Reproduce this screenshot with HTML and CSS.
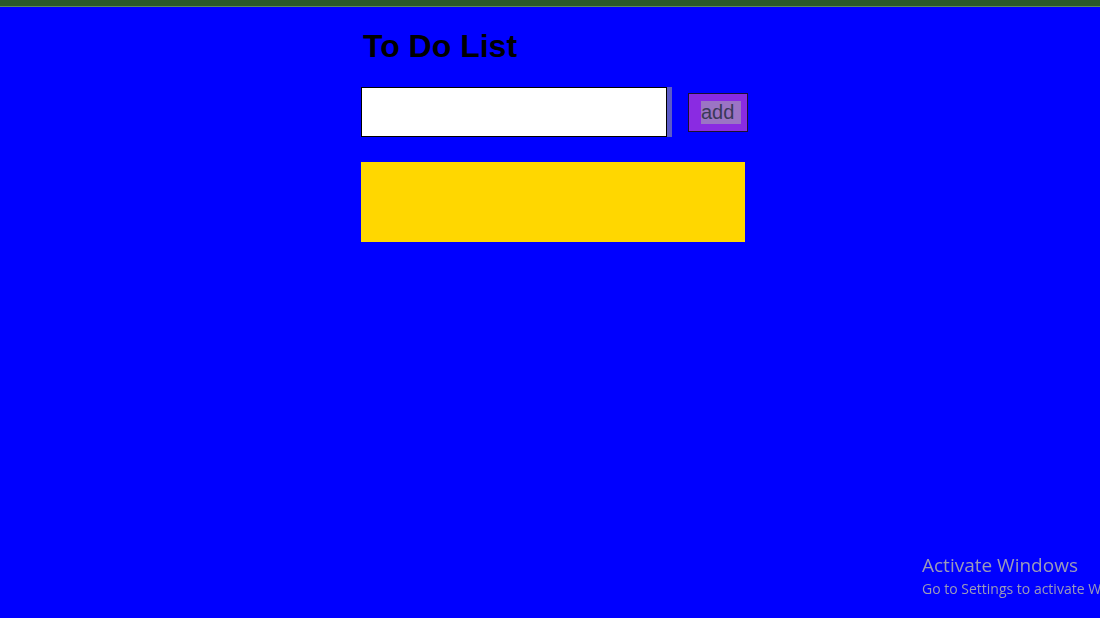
FILE: index.html
```html
<!DOCTYPE html>
<html lang="en">
<head>
<meta charset="utf-8">
<title>To Do List</title>
<link rel="stylesheet" href="styles.css">
</head>
<body>
<div class="topbar"></div>
<main class="app">
  <h1 class="title">To Do List</h1>
  <div class="entry">
    <div class="field">
      <input class="task-input" type="text">
      <div class="field-edge"></div>
    </div>
    <button class="add-btn"><span class="add-label">add</span></button>
  </div>
  <div class="list"></div>
</main>
<div class="watermark">
  <div class="wm-title">Activate Windows</div>
  <div class="wm-sub">Go to Settings to activate Windows.</div>
</div>
</body>
</html>
```
FILE: styles.css
```css
html, body {
  margin: 0;
  padding: 0;
  height: 100%;
  overflow: hidden;
}
body {
  background: #0000ff;
  font-family: "Liberation Sans", Arial, sans-serif;
}
.topbar {
  height: 6px;
  background: #2a5a2b;
  border-bottom: 1px solid #5b8a5b;
}
.app {
  padding: 21px 0 0 361px;
}
.title {
  margin: 0 0 0 2px;
  font-size: 32px;
  font-weight: bold;
  color: #000;
  line-height: 37px;
}
.entry {
  display: flex;
  align-items: center;
  margin-top: 22px;
}
.field {
  display: flex;
}
.task-input {
  box-sizing: border-box;
  width: 306px;
  height: 50px;
  margin: 0;
  border: 1px solid #000;
  background: #fff;
  padding: 0;
  outline: none;
}
.field-edge {
  width: 5px;
  height: 50px;
  background: #5b5bc8;
}
.add-btn {
  box-sizing: border-box;
  margin-left: 16px;
  width: 60px;
  height: 39px;
  border: 1px solid #1a1030;
  background: #8a2be2;
  padding: 0 0 0 12px;
  display: flex;
  align-items: center;
  font-family: "Liberation Sans", Arial, sans-serif;
  font-size: 20px;
  color: #3a3858;
}
.add-label {
  background: #9b74c4;
  line-height: 23px;
  padding-right: 7px;
}
.list {
  margin-top: 25px;
  width: 384px;
  height: 80px;
  background: #ffd700;
}
.watermark {
  position: fixed;
  left: 922px;
  top: 553px;
  white-space: nowrap;
  font-family: "Open Sans", "Noto Sans", sans-serif;
  color: #9a9ab8;
}
.wm-title {
  font-size: 19px;
  line-height: 25px;
}
.wm-sub {
  font-size: 14px;
  line-height: 22px;
}
```
